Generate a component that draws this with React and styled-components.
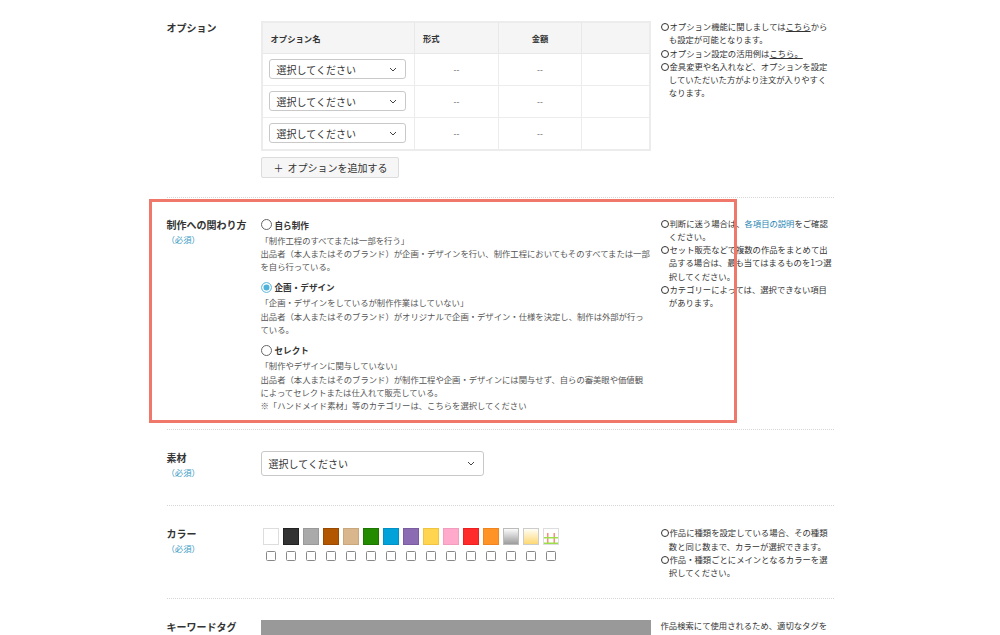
import React from 'react'
import styled, { createGlobalStyle } from 'styled-components'

const GlobalStyle = createGlobalStyle`
  body {
    margin: 0;
    background: #fff;
    color: #333;
    font-family: "Noto Sans CJK JP", "Noto Sans", sans-serif;
  }
`

const Page = styled.div`
  width: 667px;
  margin: 0 auto;
`

const Section = styled.section`
  position: relative;
  display: grid;
  grid-template-columns: 94px 390px 1fr;
  padding: ${p => p.$pt || 20}px 0 ${p => p.$pb || 20}px;
  border-bottom: ${p => (p.$last ? 'none' : '1px dotted #d6d6d6')};
`

const Label = styled.div`
  font-size: 10px;
  line-height: 16px;
  font-weight: 700;
  color: #333;
`

const Required = styled.div`
  font-size: 8.4px;
  line-height: 12px;
  font-weight: 400;
  color: #3d9cc4;
`

const Main = styled.div`
  min-width: 0;
`

const Notes = styled.ul`
  margin: 0;
  padding: 0 0 0 10px;
  list-style: none;
  font-size: 8.33px;
  line-height: 13.3px;
  color: #333;
`

const Note = styled.li`
  padding-left: ${p => (p.$plain ? 0 : '1em')};
  text-indent: ${p => (p.$plain ? 0 : '-1em')};
`

const Bullet = styled.span`
  display: inline-block;
  box-sizing: border-box;
  width: 8px;
  height: 8px;
  margin-right: 1px;
  border: 1px solid #333;
  border-radius: 50%;
  vertical-align: -1px;
`

const Under = styled.span`
  text-decoration: underline;
`

const Link = styled.span`
  color: #2585b3;
`

/* option table */

const Table = styled.table`
  width: 390px;
  margin-top: 1px;
  table-layout: fixed;
  border-collapse: collapse;
  border: 2px solid #ececec;
  font-size: 8.33px;
`

const Th = styled.th`
  box-sizing: border-box;
  height: 31px;
  padding: 0 8px;
  background: #f5f5f5;
  border: 1.5px solid #e8e8e8;
  text-align: ${p => p.$align || 'left'};
  font-weight: 700;
  color: #333;
  width: ${p => (p.$w ? `${p.$w}px` : 'auto')};
`

const Td = styled.td`
  height: 31px;
  padding: 0 6px;
  border: 1.5px solid #ececec;
  text-align: center;
  color: #555;
`

const Select = styled.div`
  display: flex;
  align-items: center;
  justify-content: space-between;
  box-sizing: border-box;
  width: ${p => p.$w}px;
  height: ${p => p.$h}px;
  padding: 0 8px 0 7px;
  border: 1px solid #c9c9c9;
  border-radius: 3px;
  background: #fff;
  font-size: 10px;
  color: #333;
  text-align: left;
`

const AddButton = styled.div`
  display: inline-flex;
  align-items: center;
  gap: 4px;
  box-sizing: border-box;
  width: 138px;
  height: 21px;
  margin-top: 6px;
  padding-left: 12px;
  background: #f6f6f6;
  border: 1px solid #dcdcdc;
  border-radius: 2px;
  font-size: 10px;
  color: #333;
`

/* radio options */

const Option = styled.div`
  & + & {
    margin-top: 6px;
  }
`

const OptionTitle = styled.div`
  display: flex;
  align-items: center;
  gap: 3px;
  height: 16px;
  font-size: 8.6px;
  font-weight: 700;
  color: #333;
`

const Radio = styled.span`
  box-sizing: border-box;
  width: 11px;
  height: 11px;
  border-radius: 50%;
  border: 1px solid ${p => (p.$on ? '#7cc6e2' : '#666')};
  background: ${p => (p.$on ? '#4fb2d8' : '#fff')};
  box-shadow: ${p => (p.$on ? 'inset 0 0 0 1.5px #fff' : 'none')};
`

const Desc = styled.div`
  margin-top: 1px;
  font-size: 8.33px;
  line-height: 13.3px;
  color: #555;
`

const Highlight = styled.div`
  position: absolute;
  top: 1px;
  left: -18px;
  width: 588px;
  height: 224px;
  box-sizing: border-box;
  border: 3px solid #ef786b;
  pointer-events: none;
`

/* colors */

const Swatches = styled.div`
  display: flex;
  gap: 4px;
  margin-top: 2px;
  padding-left: 2px;
`

const SwatchCol = styled.div`
  display: flex;
  flex-direction: column;
  align-items: center;
  gap: 6px;
`

const Swatch = styled.div`
  box-sizing: border-box;
  width: 16px;
  height: 17px;
  background: ${p => p.$bg};
  border: 1px solid ${p => p.$border || 'rgba(0,0,0,0.15)'};
  overflow: hidden;
`

const Check = styled.span`
  box-sizing: border-box;
  width: 10px;
  height: 10px;
  border: 1px solid #888;
  border-radius: 1.5px;
  background: #fff;
`

const GrayBar = styled.div`
  height: 30px;
  margin-top: 1px;
  background: #999;
`

const Chevron = () => (
  <svg width="8" height="5" viewBox="0 0 8 5">
    <path d="M1 1 L4 4 L7 1" fill="none" stroke="#444" strokeWidth="1" />
  </svg>
)

const colors = [
  { bg: '#fff', border: '#ddd' },
  { bg: '#333', border: '#222' },
  { bg: '#aaa', border: '#999' },
  { bg: '#b25600', border: '#9a4a00' },
  { bg: '#d9b68b', border: '#c9a77d' },
  { bg: '#228b00', border: '#1c7600' },
  { bg: '#00a2d9', border: '#0090c4' },
  { bg: '#8b6bb1', border: '#7a5ca0' },
  { bg: '#ffd44f', border: '#f0c440' },
  { bg: '#ffaacb', border: '#f29dbd' },
  { bg: '#ff2a2a', border: '#ee1f1f' },
  { bg: '#ff9326', border: '#f08520' },
  { bg: 'linear-gradient(#fbfbfb, #9c9c9c)', border: '#bbb' },
  { bg: 'linear-gradient(#fffef6, #fdd874)', border: '#ccc' },
  { bg: '#fff', border: '#ddd', multi: true },
]

const Multi = () => (
  <svg width="14" height="15" viewBox="0 0 14 15">
    <rect x="3" y="0" width="1.5" height="15" fill="#ff8a7a" />
    <rect x="9.5" y="0" width="1.5" height="15" fill="#ff8a7a" />
    <rect x="0" y="4" width="14" height="1.5" fill="#9be04a" />
    <rect x="0" y="9.5" width="14" height="1.5" fill="#9be04a" />
  </svg>
)

const options = [
  {
    title: '自ら制作',
    lines: [
      '「制作工程のすべてまたは一部を行う」',
      '出品者（本人またはそのブランド）が企画・デザインを行い、制作工程においてもそのすべてまたは一部を自ら行っている。',
    ],
  },
  {
    title: '企画・デザイン',
    on: true,
    lines: [
      '「企画・デザインをしているが制作作業はしていない」',
      '出品者（本人またはそのブランド）がオリジナルで企画・デザイン・仕様を決定し、制作は外部が行っている。',
    ],
  },
  {
    title: 'セレクト',
    lines: [
      '「制作やデザインに関与していない」',
      '出品者（本人またはそのブランド）が制作工程や企画・デザインには関与せず、自らの審美眼や価値観によってセレクトまたは仕入れて販売している。',
      '※「ハンドメイド素材」等のカテゴリーは、こちらを選択してください',
    ],
  },
]

export default function App() {
  return (
    <Page>
      <GlobalStyle />

      <Section $pt={20} $pb={19}>
        <Label>オプション</Label>
        <Main>
          <Table>
            <thead>
              <tr>
                <Th $w={153}>オプション名</Th>
                <Th $w={84}>形式</Th>
                <Th $w={83} $align="center">金額</Th>
                <Th />
              </tr>
            </thead>
            <tbody>
              {[0, 1, 2].map(i => (
                <tr key={i}>
                  <Td>
                    <Select $w={137} $h={20}>
                      選択してください
                      <Chevron />
                    </Select>
                  </Td>
                  <Td>--</Td>
                  <Td>--</Td>
                  <Td />
                </tr>
              ))}
            </tbody>
          </Table>
          <AddButton>
            <span>＋</span>
            オプションを追加する
          </AddButton>
        </Main>
        <Notes>
          <Note><Bullet />オプション機能に関しましては<Under>こちら</Under>から<br />も設定が可能となります。</Note>
          <Note><Bullet />オプション設定の活用例は<Under>こちら。</Under></Note>
          <Note><Bullet />金具変更や名入れなど、オプションを設定<br />していただいた方がより注文が入りやすく<br />なります。</Note>
        </Notes>
      </Section>

      <Section $pt={19} $pb={17}>
        <Highlight />
        <div>
          <Label>制作への関わり方</Label>
          <Required>（必須）</Required>
        </div>
        <Main>
          {options.map(o => (
            <Option key={o.title}>
              <OptionTitle>
                <Radio $on={o.on} />
                {o.title}
              </OptionTitle>
              <Desc>
                {o.lines.map(l => (
                  <div key={l}>{l}</div>
                ))}
              </Desc>
            </Option>
          ))}
        </Main>
        <Notes>
          <Note><Bullet />判断に迷う場合は、<Link>各項目の説明</Link>をご確認<br />ください。</Note>
          <Note><Bullet />セット販売などで複数の作品をまとめて出<br />品する場合は、最も当てはまるものを1つ選<br />択してください。</Note>
          <Note><Bullet />カテゴリーによっては、選択できない項目<br />があります。</Note>
        </Notes>
      </Section>

      <Section $pt={20} $pb={27}>
        <div>
          <Label>素材</Label>
          <Required>（必須）</Required>
        </div>
        <Main>
          <Select $w={223} $h={25} style={{ marginTop: 1 }}>
            選択してください
            <Chevron />
          </Select>
        </Main>
        <Notes />
      </Section>

      <Section $pt={20} $pb={18}>
        <div>
          <Label>カラー</Label>
          <Required>（必須）</Required>
        </div>
        <Main>
          <Swatches>
            {colors.map((c, i) => (
              <SwatchCol key={i}>
                <Swatch $bg={c.bg} $border={c.border}>
                  {c.multi && <Multi />}
                </Swatch>
                <Check />
              </SwatchCol>
            ))}
          </Swatches>
        </Main>
        <Notes>
          <Note><Bullet />作品に種類を設定している場合、その種類<br />数と同じ数まで、カラーが選択できます。</Note>
          <Note><Bullet />作品・種類ごとにメインとなるカラーを選<br />択してください。</Note>
        </Notes>
      </Section>

      <Section $pt={20} $pb={20} $last>
        <Label>キーワードタグ</Label>
        <Main>
          <GrayBar />
        </Main>
        <Notes>
          <Note $plain>作品検索にて使用されるため、適切なタグを</Note>
        </Notes>
      </Section>
    </Page>
  )
}
